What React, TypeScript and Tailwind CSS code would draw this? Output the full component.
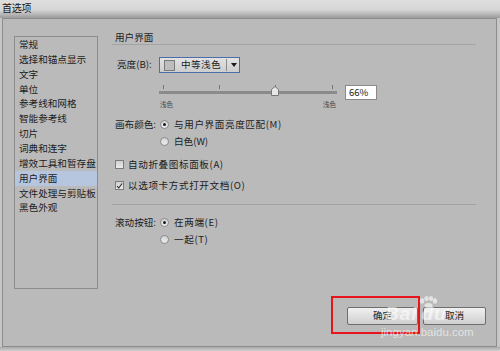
import React from "react";

const items = [
  "常规",
  "选择和锚点显示",
  "文字",
  "单位",
  "参考线和网格",
  "智能参考线",
  "切片",
  "词典和连字",
  "增效工具和暂存盘",
  "用户界面",
  "文件处理与剪贴板",
  "黑色外观",
];

function Radio({ on }: { on?: boolean }) {
  return (
    <span className="flex h-[9px] w-[9px] shrink-0 items-center justify-center rounded-full border border-[#8a8a8a] bg-[linear-gradient(to_bottom,#d4d4d4,#ececec)]">
      {on && <span className="h-[3px] w-[3px] rounded-full bg-[#1a1a1a]" />}
    </span>
  );
}

function Check({ on }: { on?: boolean }) {
  return (
    <span className="flex h-[9px] w-[9px] shrink-0 items-center justify-center border border-[#7c7c7c] bg-[linear-gradient(to_bottom,#d0d0d0,#ebebeb)]">
      {on && (
        <svg width="8" height="8" viewBox="0 0 8 8">
          <path d="M1.2 4.2 L3.2 6.3 L6.9 1.2" fill="none" stroke="#222" strokeWidth="1.2" />
        </svg>
      )}
    </span>
  );
}

export default function App() {
  return (
    <div
      className="relative h-[351px] w-[500px] overflow-hidden bg-[#c6c6c6] text-[#1c1c1c]"
      style={{ fontFamily: '"Noto Sans CJK SC", "Noto Sans", sans-serif' }}
    >
      {/* title bar */}
      <div className="flex h-[18px] items-start bg-[linear-gradient(to_bottom,#dedede_0%,#d6d6d6_55%,#9c9c9c_100%)] pl-[2px]">
        <span className="text-[10px] leading-[15px] tracking-[-0.3px] text-[#151515]">首选项</span>
      </div>

      {/* panel */}
      <div className="ml-[2px] mr-[3px] flex h-[329px] flex-col border border-[#8d8d8d] bg-[#bababa] pl-[11px] pr-[10px] pt-[12px]">
        <div className="flex items-start">
          {/* left list */}
          <div className="mt-[5px] h-[253px] w-[84px] shrink-0 border border-[#8c8c8c]">
            {items.map((t) => (
              <div
                key={t}
                className={`h-[14.86px] whitespace-nowrap pl-[4px] text-[9.6px] leading-[14.86px] ${
                  t === "用户界面" ? "bg-[#b6c6de]" : ""
                }`}
              >
                {t}
              </div>
            ))}
          </div>

          {/* right column */}
          <div className="ml-[14px] flex w-[364px] flex-col text-[9.6px]">
            <div className="h-[14px] border-b border-[#a4a4a4] pl-[3px] leading-[12px]">用户界面</div>

            {/* brightness */}
            <div className="mt-[12px] flex h-[16px] items-center">
              <span className="w-[47px] pl-[5px] leading-none">亮度(B):</span>
              <div className="flex h-[16px] w-[81px] items-center border border-[#4b6ea8] bg-[linear-gradient(to_bottom,#e2e2e2,#cdcdcd)]">
                <span className="ml-[4px] h-[11px] w-[11px] border border-[#7a7a7a] bg-[#bdbdbd]" />
                <span className="ml-[6px] leading-none tracking-[0.4px]">中等浅色</span>
                <span className="ml-[5px] h-[12px] w-px bg-[#8a8a8a]" />
                <svg className="ml-[4px]" width="6" height="4" viewBox="0 0 6 4">
                  <path d="M0 0 H6 L3 4 Z" fill="#1a1a1a" />
                </svg>
              </div>
            </div>

            {/* slider */}
            <div className="mt-[12px] flex items-start">
              <div className="ml-[47px] flex w-[178px] flex-col">
                <div className="relative h-[10px]">
                  <span className="absolute left-[4px] top-0 h-[4px] w-px bg-[#777]" />
                  <span className="absolute left-[60px] top-0 h-[4px] w-px bg-[#777]" />
                  <span className="absolute left-[116px] top-0 h-[4px] w-px bg-[#777]" />
                  <span className="absolute left-[173px] top-0 h-[4px] w-px bg-[#777]" />
                  <span className="absolute left-0 top-[6px] h-[3px] w-[178px] bg-[#8a8a8a]" />
                  <svg className="absolute left-[112px] top-[1px]" width="8" height="10" viewBox="0 0 8 10">
                    <path d="M0.5 9.5 V3.5 L4 0.5 L7.5 3.5 V9.5 Z" fill="#e6e6e6" stroke="#777" strokeWidth="1" />
                  </svg>
                </div>
                <div className="mt-[6px] flex justify-between pl-[1px] pr-[1px] text-[6.5px] leading-[7px] text-[#444]">
                  <span>浅色</span>
                  <span>浅色</span>
                </div>
              </div>
              <div className="ml-[8px] flex h-[15px] w-[32px] items-center border border-[#8a8a8a] bg-white pl-[3px] text-[9.5px] leading-none">
                66%
              </div>
            </div>

            {/* canvas colour */}
            <div className="mt-[8px] flex h-[17px] items-center">
              <span className="w-[48px] pl-[3px] leading-none">画布颜色:</span>
              <Radio on />
              <span className="ml-[5px] leading-none tracking-[0.6px]">与用户界面亮度匹配(M)</span>
            </div>
            <div className="flex h-[17px] items-center pl-[48px]">
              <Radio />
              <span className="ml-[5px] leading-none">白色(W)</span>
            </div>

            <div className="mt-[6px] flex h-[17px] items-center pl-[3px]">
              <Check />
              <span className="ml-[4px] leading-none tracking-[0.6px]">自动折叠图标面板(A)</span>
            </div>
            <div className="mt-[4px] flex h-[17px] items-center pl-[3px]">
              <Check on />
              <span className="ml-[4px] leading-none tracking-[0.6px]">以选项卡方式打开文档(O)</span>
            </div>

            <div className="mt-[10px] h-px w-full bg-[#a2a2a2]" />

            <div className="mt-[9px] flex h-[17px] items-center">
              <span className="w-[48px] pl-[3px] leading-none">滚动按钮:</span>
              <Radio on />
              <span className="ml-[5px] leading-none tracking-[0.6px]">在两端(E)</span>
            </div>
            <div className="flex h-[17px] items-center pl-[48px]">
              <Radio />
              <span className="ml-[5px] leading-none tracking-[0.6px]">一起(T)</span>
            </div>
          </div>
        </div>

        {/* buttons */}
        <div className="mt-[18px] flex justify-end gap-[5px]">
          <button className="flex h-[18px] w-[71px] items-center justify-center rounded-[2px] border border-[#6e6e6e] bg-[linear-gradient(to_bottom,#f0f0f0,#cfcfcf)] text-[9.6px] leading-none">
            确定
          </button>
          <button className="flex h-[18px] w-[63px] items-center justify-center rounded-[2px] border border-[#6e6e6e] bg-[linear-gradient(to_bottom,#f0f0f0,#cfcfcf)] text-[9.6px] leading-none">
            取消
          </button>
        </div>
      </div>

      {/* bottom strip */}
      <div className="h-[4px] bg-[linear-gradient(to_bottom,#a8a8a8,#cfcfcf)]" />

      {/* red highlight frame */}
      <div className="absolute left-[331px] top-[296px] h-[38px] w-[89px] border-2 border-[#e8141c]" />

      {/* watermark */}
      <svg className="absolute left-[418px] top-[296px]" width="20" height="12" viewBox="0 0 20 12">
        <g fill="#ffffff" opacity="0.6">
          <ellipse cx="4" cy="5" rx="2.2" ry="2.8" />
          <ellipse cx="8.5" cy="2.5" rx="2.2" ry="2.5" />
          <ellipse cx="13" cy="2.5" rx="2.2" ry="2.5" />
          <ellipse cx="17" cy="5" rx="2.2" ry="2.8" />
          <ellipse cx="10.5" cy="9.5" rx="4" ry="2.5" />
        </g>
      </svg>
      <div
        className="absolute left-[385px] top-[304px] text-[19px] font-bold italic leading-[20px] tracking-[1px] text-white/55"
        style={{ fontFamily: '"Liberation Sans", Arial, sans-serif' }}
      >
        Bai<span className="ml-[4px]">du</span>
      </div>
      <div
        className="absolute left-[381px] top-[326px] text-[11.5px] leading-[13px] text-white/60"
        style={{ fontFamily: '"Liberation Sans", Arial, sans-serif' }}
      >
        jingyan.baidu.com
      </div>
    </div>
  );
}
